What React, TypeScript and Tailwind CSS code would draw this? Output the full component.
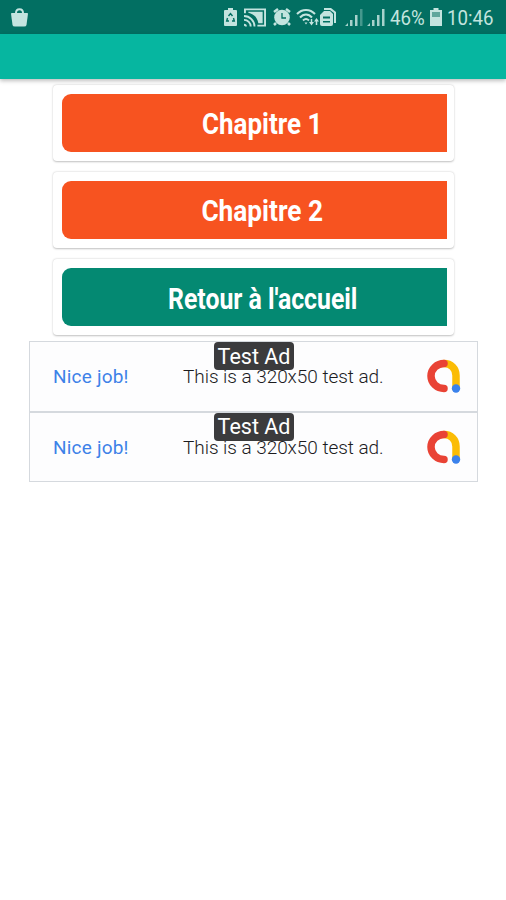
import React from "react";

const chapters = [
  { label: "Chapitre 1", color: "bg-[#f75320]", textClass: "scale-x-[0.895]" },
  { label: "Chapitre 2", color: "bg-[#f75320]", textClass: "scale-x-[0.905]" },
  { label: "Retour à l'accueil", color: "bg-[#048972]", textClass: "scale-x-[0.855] pt-0.5" },
];

const App: React.FC = () => {
  return (
    <div className="h-[900px] w-[506px] overflow-hidden bg-white font-[Roboto,sans-serif]">
      <StatusBar />
      <header className="relative h-[45px] bg-[#06b6a0] shadow-[0_2px_4px_rgba(0,0,0,0.25)]" />
      <main>
        <div className="ml-[53px] mt-1.5 flex w-[401px] flex-col gap-[11px]">
          {chapters.map((chapter) => (
            <MenuButton key={chapter.label} {...chapter} />
          ))}
        </div>
        <div className="ml-[29px] mt-1.5 w-[449px]">
          <TestAd />
          <TestAd />
        </div>
      </main>
    </div>
  );
};

export default App;

const MenuButton: React.FC<{ label: string; color: string; textClass: string }> = ({
  label,
  color,
  textClass,
}) => {
  return (
    <div className="h-[76px] rounded-[4px] bg-white py-[9px] pl-[9px] pr-[7px] shadow-[0_0.5px_2px_rgba(0,0,0,0.25)]">
      <button
        className={`flex h-[58px] w-full items-center justify-center rounded-l-[9px] pl-4 pt-[3px] text-white ${color}`}
      >
        <span className={`whitespace-nowrap text-[29px] font-bold leading-none ${textClass}`}>
          {label}
        </span>
      </button>
    </div>
  );
};

const TestAd: React.FC = () => {
  return (
    <div className="relative flex h-[70.5px] items-center border border-[#d5d9de] bg-[#fdfdfe]">
      <span className="ml-[23px] w-[130px] whitespace-nowrap pt-0.5 text-[19px] tracking-[0.2px] text-[#3d82e8]">
        Nice job!
      </span>
      <span className="w-[242.5px] whitespace-nowrap pt-0.5 text-[19px] font-light tracking-[-0.05px] text-[#1c1c1e]">
        This is a 320x50 test ad.
      </span>
      <AdLogo />
      <span className="absolute left-[184px] top-0 flex h-[28px] w-[80px] items-center justify-center whitespace-nowrap rounded-[4px] bg-[#3b3b3d] pt-px text-[21.5px] leading-none text-white">
        Test Ad
      </span>
    </div>
  );
};

const AdLogo: React.FC = () => {
  return (
    <svg width="36" height="36" viewBox="0 0 36 36" fill="none" strokeWidth="7.5" strokeLinecap="round">
      <path d="M18 5.5c7 0 12 5 12 12V30" stroke="#fbbc05" />
      <path d="M18 5.5C11 5.5 5 11 5 18s6 12.500 13 12.500" stroke="#e94335" />
      <circle cx="30" cy="30.500" r="4.200" fill="#3b82ec" />
    </svg>
  );
};

const Signal: React.FC<{ weak?: boolean }> = ({ weak }) => {
  return (
    <svg width="18" height="18" viewBox="0 0 18 18" fill="currentColor">
      <path d="M0 18l3-3v3zM5 12h2.500v6H5zM10 7h2.500v11H10z" opacity="0.85" />
      <path d="M15 1h2.500v17H15z" opacity={weak ? 0.35 : 0.85} />
    </svg>
  );
};

const StatusBar: React.FC = () => {
  return (
    <div className="flex h-[34px] items-center bg-[#026f62] pl-[11px] text-[#c3e4df]">
      <svg width="17" height="19" viewBox="0 0 17 19" fill="currentColor">
        <path d="M0 5.500Q0 5 1 5h15q1 0 1 .5L15.500 17q-.3 1.500-2.500 1.500H4q-2.200 0-2.500-1.500z" />
        <path d="M5 7V5c0-5 7-5 7 0v2" fill="none" stroke="currentColor" strokeWidth="2" />
      </svg>
      <svg className="ml-[196px]" width="13" height="18" viewBox="0 0 13 18">
        <path d="M4 0h5v2h3q1 0 1 1v14q0 1-1 1H1q-1 0-1-1V3q0-1 1-1h3z" fill="currentColor" />
        <path d="M4.500 8l2-2.500 2 2.500M9.500 10l.8 3H8M5 13H2.700l.8-3" fill="none" stroke="#026f62" strokeWidth="1.400" />
      </svg>
      <svg className="ml-[7px]" width="22" height="19" viewBox="0 0 23 19" fill="none" stroke="currentColor" strokeWidth="2">
        <path d="M1 5V1h21v17h-8" />
        <path d="M4.500 4.500V3.500h15v12H15c-1-6-5-10-10.500-11z" fill="currentColor" stroke="none" />
        <path d="M0 8c6 0 11 5 11 11M0 12c4 0 7 3 7 7M0 17c1 0 2 1 2 2" />
      </svg>
      <svg className="ml-[7px]" width="18" height="18" viewBox="0 0 18 18">
        <circle cx="9" cy="9.500" r="7.800" fill="currentColor" />
        <path d="M1 4l4-3M13 1l4 3M3 15l-2 2M15 15l2 2" stroke="currentColor" strokeWidth="2.500" />
        <path d="M9 5v5h4" stroke="#026f62" strokeWidth="1.300" fill="none" />
      </svg>
      <svg className="ml-[5px]" width="23" height="18" viewBox="0 0 23 18" fill="none" stroke="currentColor" strokeWidth="2">
        <path d="M1 6c5-5.500 13-5.500 18 0M4 9.500c3.500-4 8.500-4 12 0M7 12.500c2-2 4-2 6 0" />
        <path d="M8.500 14.500h3L10 16.500z" fill="currentColor" stroke="none" />
        <path d="M15.500 11v4M20.500 17v-5" strokeWidth="1.500" />
        <path d="M13 14h5l-2.500 3.500zM18 13.500l2.500-3.500 2.500 3.500z" fill="currentColor" stroke="none" />
      </svg>
      <svg className="ml-px" width="17" height="18" viewBox="0 0 17 18">
        <path d="M4 0h7l5 4v11h-2V5l-4-3H4z" fill="currentColor" />
        <path d="M4 3h6l3 3v10q0 2-2 2H2q-2 0-2-2V7z" fill="currentColor" />
        <path d="M3 8.500h7v2H3zM3 13h7v1.500H3z" fill="#026f62" />
      </svg>
      <div className="ml-2 flex gap-[4px]">
        <Signal weak />
        <Signal />
      </div>
      <span className="ml-[5px] w-[40px] origin-left scale-x-[0.89] whitespace-nowrap pt-0.5 text-[21px] leading-none">
        46%
      </span>
      <svg width="12" height="18" viewBox="0 0 12 18">
        <path d="M3.500 0h5v2H12v16H0V2h3.500z" fill="currentColor" />
        <path d="M2 4h8v5H2z" fill="#5fa69c" />
      </svg>
      <span className="ml-[5px] origin-left scale-x-[0.89] whitespace-nowrap pt-0.5 text-[21px] leading-none">
        10:46
      </span>
    </div>
  );
};
